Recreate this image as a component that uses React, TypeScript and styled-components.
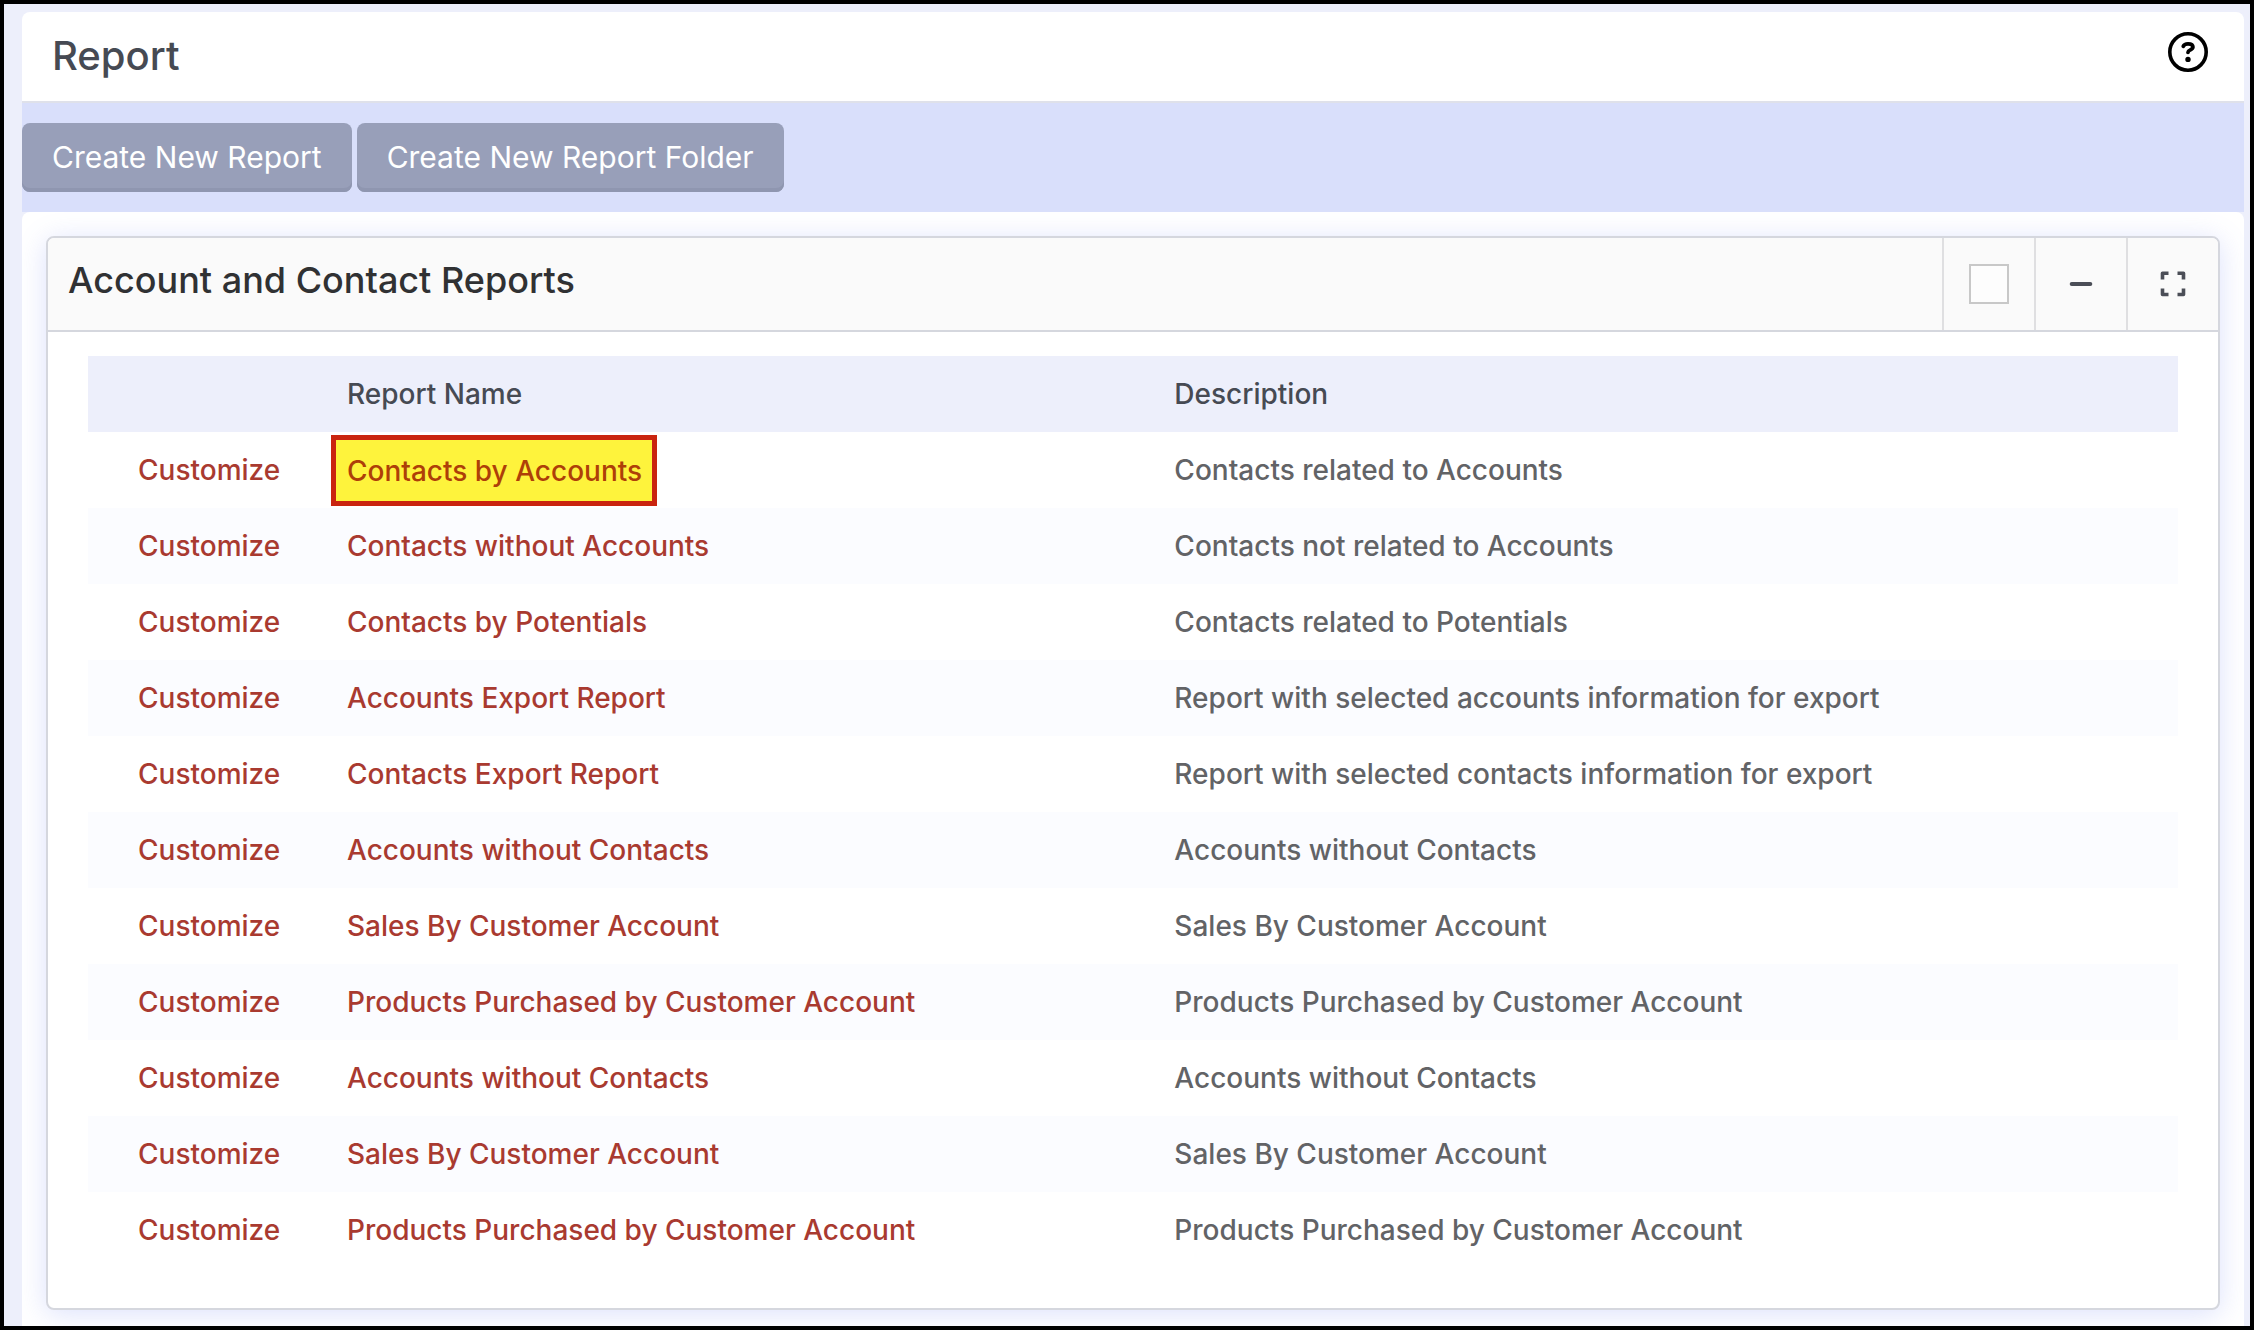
import React from "react";
import styled, { createGlobalStyle } from "styled-components";

const GlobalStyle = createGlobalStyle`
  *, *::before, *::after { box-sizing: border-box; }
  body {
    margin: 0;
    background: #edeffb;
    font-family: Inter, "Liberation Sans", sans-serif;
    font-size: 28px;
    line-height: 36px;
  }
`;

const Frame = styled.div`
  display: flex;
  flex-direction: column;
  min-height: 100vh;
  padding: 8px 6px 0 18px;
  border: 4px solid #000;
  background: #edeffb;
`;

const PageHeader = styled.header`
  display: flex;
  align-items: flex-start;
  justify-content: space-between;
  padding: 20px 36px 21px 30px;
  border-bottom: 2px solid #dfe1ea;
  border-radius: 8px 8px 0 0;
  background: #fff;
`;

const PageTitle = styled.h1`
  margin: 0;
  color: #464a53;
  font-size: 40px;
  font-weight: 500;
  line-height: 48px;
`;

const IconButton = styled.button`
  display: flex;
  padding: 0;
  border: 0;
  background: none;
  color: #000;
  cursor: pointer;
`;

const Toolbar = styled.div`
  display: flex;
  gap: 5px;
  padding: 20px 0;
  background: #d9dffb;
`;

const ToolbarButton = styled.button`
  padding: 16px 30px 17px;
  border: 0;
  border-radius: 8px;
  background: #989fb9;
  box-shadow: inset 0 -4px 0 #8f96b0;
  color: #fff;
  font: inherit;
  font-size: 30px;
  cursor: pointer;
`;

const Content = styled.main`
  flex: 1;
  padding: 24px 24px 16px;
  border-radius: 8px 8px 0 0;
  background: #fff;
  overflow: hidden;
`;

const Card = styled.section`
  border: 2px solid #d5d7de;
  border-radius: 8px;
  background: #fff;
  box-shadow: 0 4px 28px rgba(96, 120, 240, 0.22);
`;

const CardHeader = styled.div`
  display: flex;
  justify-content: space-between;
  height: 94px;
  border-bottom: 2px solid #d5d7de;
  border-radius: 6px 6px 0 0;
  background: #fafafa;
`;

const CardTitle = styled.h2`
  margin: 0;
  padding: 20px;
  color: #303133;
  font-size: 36px;
  font-weight: 500;
  line-height: 44px;
`;

const CardTools = styled.div`
  display: flex;
`;

const ToolCell = styled.div`
  display: flex;
  align-items: center;
  justify-content: center;
  width: 92px;
  border-left: 2px solid #dfdfe1;
`;

const ToolButton = styled(IconButton)`
  align-items: center;
  justify-content: center;
  width: 100%;
  height: 100%;
  color: #4b4e57;
`;

const SelectBox = styled.input`
  appearance: none;
  width: 40px;
  height: 40px;
  margin: 0;
  border: 2px solid #c8c8c8;
  background: #fdfdfd;
`;

const CardBody = styled.div`
  padding: 24px 40px 40px;
`;

const ReportTable = styled.table`
  width: 100%;
  border-collapse: collapse;
  table-layout: fixed;
  font-weight: 500;
`;

const ActionCol = styled.col`
  width: 249px;
`;

const DescriptionCol = styled.col`
  width: 48.5%;
`;

const HeadCell = styled.th`
  height: 76px;
  padding: 0 10px;
  background: #edeffb;
  color: #464a53;
  font-weight: 500;
  text-align: left;
`;

const Row = styled.tr`
  &:nth-child(even) { background: #fbfcff; }
`;

const Cell = styled.td<{ $action?: boolean }>`
  height: 76px;
  padding: 0 ${(p) => (p.$action ? "10px 0 50px" : "10px")};
  color: #626366;
`;

const ReportLink = styled.a<{ $highlight?: boolean }>`
  color: ${(p) => (p.$highlight ? "#ae3f08" : "#a93a30")};
  text-decoration: none;
  ${(p) =>
    p.$highlight &&
    `
    display: inline-block;
    margin-left: -16px;
    padding: 13px 10px 12px 11px;
    border: 5px solid #c9240f;
    background: #fef33c;
  `}
`;

const HelpIcon = () => (
  <svg width="40" height="40" viewBox="0 0 40 40" fill="none" aria-hidden="true">
    <circle cx="20" cy="20" r="18.2" stroke="currentColor" strokeWidth="3.6" />
    <path d="M15.3 14.2C16 12.6 17.6 11.8 20 11.8C23 11.8 24.9 12.8 24.9 15.1C24.9 17.9 20.2 17.7 20 20.3" stroke="currentColor" strokeWidth="3.8" strokeLinecap="round" strokeLinejoin="round" />
    <circle cx="20" cy="27.4" r="2.7" fill="currentColor" />
  </svg>
);

const MinusIcon = () => (
  <svg width="24" height="24" viewBox="0 0 24 24" fill="none" aria-hidden="true">
    <path d="M2.7 12H21.3" stroke="currentColor" strokeWidth="4" strokeLinecap="round" />
  </svg>
);

const ExpandIcon = () => (
  <svg width="26" height="26" viewBox="0 0 26 26" fill="none" aria-hidden="true">
    <path d="M8.5 2.3H2.5V8.5M17.5 2.3H23.5V8.5M2.5 17.5V23.5H8.5M23.5 17.5V23.5H17.5" stroke="currentColor" strokeWidth="3.6" strokeLinejoin="round" />
  </svg>
);

const reports = [
  { name: "Contacts by Accounts", description: "Contacts related to Accounts", highlight: true },
  { name: "Contacts without Accounts", description: "Contacts not related to Accounts" },
  { name: "Contacts by Potentials", description: "Contacts related to Potentials" },
  { name: "Accounts Export Report", description: "Report with selected accounts information for export" },
  { name: "Contacts Export Report", description: "Report with selected contacts information for export" },
  { name: "Accounts without Contacts", description: "Accounts without Contacts" },
  { name: "Sales By Customer Account", description: "Sales By Customer Account" },
  { name: "Products Purchased by Customer Account", description: "Products Purchased by Customer Account" },
  { name: "Accounts without Contacts", description: "Accounts without Contacts" },
  { name: "Sales By Customer Account", description: "Sales By Customer Account" },
  { name: "Products Purchased by Customer Account", description: "Products Purchased by Customer Account" },
];

export default function App() {
  return (
    <>
      <GlobalStyle />
      <Frame>
        <PageHeader>
          <PageTitle>Report</PageTitle>
          <IconButton type="button" aria-label="Help">
            <HelpIcon />
          </IconButton>
        </PageHeader>
        <Toolbar>
          <ToolbarButton type="button">Create New Report</ToolbarButton>
          <ToolbarButton type="button">Create New Report Folder</ToolbarButton>
        </Toolbar>
        <Content>
          <Card>
            <CardHeader>
              <CardTitle>Account and Contact Reports</CardTitle>
              <CardTools>
                <ToolCell>
                  <SelectBox type="checkbox" aria-label="Select folder" />
                </ToolCell>
                <ToolCell>
                  <ToolButton type="button" aria-label="Collapse">
                    <MinusIcon />
                  </ToolButton>
                </ToolCell>
                <ToolCell>
                  <ToolButton type="button" aria-label="Full screen">
                    <ExpandIcon />
                  </ToolButton>
                </ToolCell>
              </CardTools>
            </CardHeader>
            <CardBody>
              <ReportTable>
                <colgroup>
                  <ActionCol />
                  <col />
                  <DescriptionCol />
                </colgroup>
                <thead>
                  <tr>
                    <HeadCell aria-label="Actions" />
                    <HeadCell scope="col">Report Name</HeadCell>
                    <HeadCell scope="col">Description</HeadCell>
                  </tr>
                </thead>
                <tbody>
                  {reports.map((report, index) => (
                    <Row key={index}>
                      <Cell $action>
                        <ReportLink href="#customize">Customize</ReportLink>
                      </Cell>
                      <Cell>
                        <ReportLink href="#report" $highlight={report.highlight}>
                          {report.name}
                        </ReportLink>
                      </Cell>
                      <Cell>{report.description}</Cell>
                    </Row>
                  ))}
                </tbody>
              </ReportTable>
            </CardBody>
          </Card>
        </Content>
      </Frame>
    </>
  );
}
